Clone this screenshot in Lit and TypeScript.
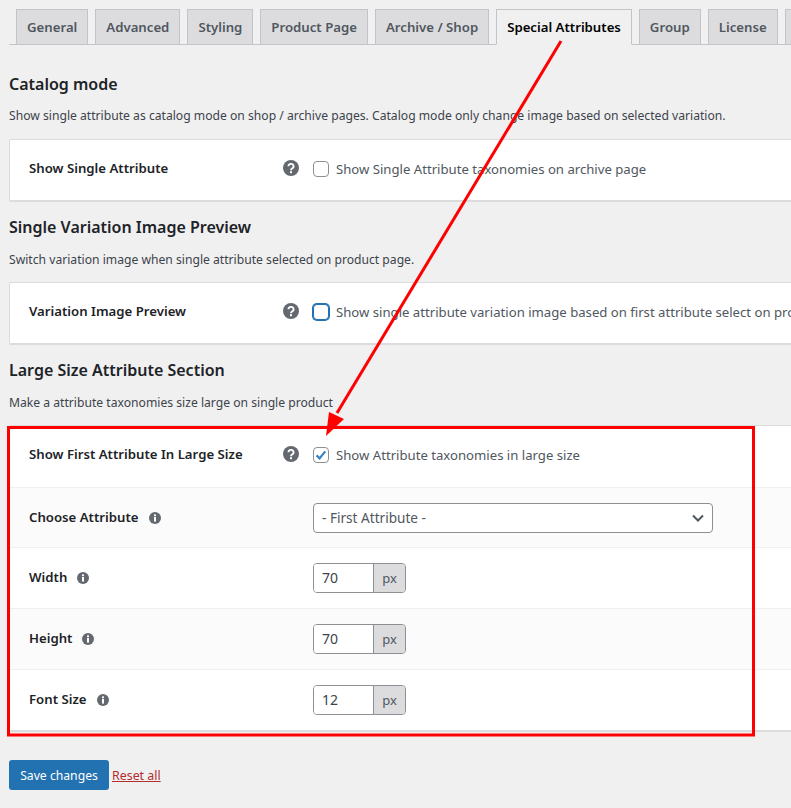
import { LitElement, html, css, svg } from "lit";
import { customElement } from "lit/decorators.js";

const TABS = ["General", "Advanced", "Styling", "Product Page", "Archive / Shop", "Special Attributes", "Group", "License", "Tutorials"];

const help = html`<svg class="help" viewBox="0 0 16 16" aria-hidden="true"><circle cx="8" cy="8" r="8" fill="#646970"/><path d="M5.4 6.2a2.6 2.4 0 1 1 4 2.1c-.9.6-1.4 1-1.4 1.9" fill="none" stroke="#fff" stroke-width="1.9"/><rect x="7" y="11.2" width="2" height="2" fill="#fff"/></svg>`;
const info = html`<svg class="info" viewBox="0 0 12 12" aria-hidden="true"><circle cx="6" cy="6" r="6" fill="#646970"/><rect x="5" y="5" width="2" height="4.6" fill="#fff"/><rect x="5" y="2.4" width="2" height="1.8" fill="#fff"/></svg>`;

@customElement("app-root")
export class AppRoot extends LitElement {
  static styles = css`
    :host { display: block; position: relative; width: 791px; height: 808px; overflow: hidden; background: #f0f0f1; font-family: "Noto Sans", sans-serif; font-size: 13px; color: #3c434a; }
    .page { padding: 9px 0 0 9px; width: 900px; }
    .tabs { display: flex; gap: 7px; padding-left: 7px; height: 35px; border-bottom: 1px solid #c3c4c7; }
    .tab { box-sizing: border-box; height: 36px; padding: 0 10px; border: 1px solid #c3c4c7; background: #dcdcde; color: #50575e; font-size: 13.2px; font-weight: 600; line-height: 34px; white-space: nowrap; }
    .tab.active { background: #f0f0f1; color: #000; border-bottom-color: #f0f0f1; }
    h2 { margin: 0; color: #1d2327; font-size: 16px; font-weight: 600; line-height: 22px; }
    .first { margin-top: 28px; }
    .next { margin-top: 14px; }
    p { height: 18px; line-height: 18px; font-size: 12.15px; white-space: nowrap; }
    .first + p { margin: 12px 0 14px; }
    .next + p { margin: 13px 0 13px; }
    .card { background: #fff; border: 1px solid #dcdcde; border-right: 0; border-bottom: 2px solid #dcdcde; border-radius: 2px 0 0 2px; }
    .row { display: flex; align-items: center; padding-left: 19px; border-bottom: 1px solid #f0f0f1; box-sizing: border-box; }
    .row:last-child { border-bottom: 0; }
    .row.alt { background: #fbfbfc; }
    .h60 { height: 60px; }
    .h61 { height: 61px; }
    .top2 { padding-bottom: 2px; }
    .top4 { height: 62px; padding-bottom: 4px; }
    .label { display: flex; align-items: center; gap: 10px; width: 284px; flex: none; color: #1d2327; font-size: 13.2px; font-weight: 600; white-space: nowrap; position: relative; top: -1px; }
    .label.spread { justify-content: space-between; gap: 0; width: 270px; margin-right: 14px; }
    .help { width: 16px; height: 16px; flex: none; }
    .info { width: 12px; height: 12px; flex: none; position: relative; top: 1px; }
    .check { display: flex; align-items: center; gap: 7px; white-space: nowrap; font-size: 13.15px; color: #50575e; }
    .box { box-sizing: border-box; width: 16px; height: 16px; flex: none; border: 1px solid #8c8f94; border-radius: 4px; background: #fff; display: block; }
    .box.focus { border-color: #2271b1; box-shadow: 0 0 0 1px #2271b1; }
    .box svg { display: block; width: 14px; height: 14px; }
    .select { box-sizing: border-box; width: 400px; height: 30px; display: flex; align-items: center; justify-content: space-between; padding: 0 8px; border: 1px solid #8c8f94; border-radius: 4px; background: #fff; color: #50575e; font-size: 13.6px; }
    .select svg { width: 12px; height: 8px; }
    .field { display: flex; height: 30px; box-sizing: border-box; border: 1px solid #8c8f94; border-radius: 4px; overflow: hidden; width: 93px; }
    .value { width: 60px; flex: none; padding-left: 8px; box-sizing: border-box; line-height: 28px; background: #fff; color: #3c434a; font-size: 14px; border-right: 1px solid #8c8f94; }
    .unit { flex: 1; background: #dcdcde; color: #50575e; text-align: center; line-height: 28px; }
    .actions { display: flex; align-items: center; gap: 3px; margin-top: 28px; }
    .save { box-sizing: border-box; width: 100px; height: 30px; background: #2271b1; color: #fff; border-radius: 3px; text-align: center; line-height: 31px; font-size: 12.2px; }
    .reset { color: #b32d2e; text-decoration: underline; font-size: 12.4px; }
    .overlay { position: absolute; left: 0; top: 0; width: 791px; height: 808px; pointer-events: none; }
  `;

  private field(label: string, value: string, cls: string) {
    return html`<div class="row ${cls}"><div class="label">${label}${info}</div>
      <div class="field"><div class="value">${value}</div><div class="unit">px</div></div></div>`;
  }

  render() {
    return html`
      <div class="page">
        <nav class="tabs">${TABS.map((t) => html`<div class="tab ${t === "Special Attributes" ? "active" : ""}">${t}</div>`)}</nav>

        <h2 class="first">Catalog mode</h2>
        <p>Show single attribute as catalog mode on shop / archive pages. Catalog mode only change image based on selected variation.</p>
        <section class="card">
          <div class="row h60 top2"><div class="label spread">Show Single Attribute${help}</div>
            <label class="check"><span class="box"></span>Show Single Attribute taxonomies on archive page</label></div>
        </section>

        <h2 class="next">Single Variation Image Preview</h2>
        <p>Switch variation image when single attribute selected on product page.</p>
        <section class="card">
          <div class="row h60 top2"><div class="label spread">Variation Image Preview${help}</div>
            <label class="check"><span class="box focus"></span>Show single attribute variation image based on first attribute select on product page</label></div>
        </section>

        <h2 class="next">Large Size Attribute Section</h2>
        <p>Make a attribute taxonomies size large on single product</p>
        <section class="card">
          <div class="row top4"><div class="label spread">Show First Attribute In Large Size${help}</div>
            <label class="check"><span class="box"><svg viewBox="0 0 14 14"><path d="M2.6 7.4l3 3 5.6-7" fill="none" stroke="#3582c4" stroke-width="2.2"/></svg></span>Show Attribute taxonomies in large size</label></div>
          <div class="row alt h60"><div class="label">Choose Attribute${info}</div>
            <div class="select">- First Attribute -<svg viewBox="0 0 12 8"><path d="M1 1.5l5 5 5-5" fill="none" stroke="#50575e" stroke-width="2"/></svg></div></div>
          ${this.field("Width", "70", "h61")}
          ${this.field("Height", "70", "alt h61")}
          ${this.field("Font Size", "12", "h60")}
        </section>

        <div class="actions"><div class="save">Save changes</div><a class="reset">Reset all</a></div>
      </div>
      <svg class="overlay" viewBox="0 0 791 808" aria-hidden="true">
        ${svg`<rect x="8.5" y="427.5" width="745" height="307.5" fill="none" stroke="#f00" stroke-width="3"/>
        <line x1="561" y1="41" x2="337" y2="413" stroke="#f00" stroke-width="3"/>
        <polygon points="326,436 329,412 344,419" fill="#f00"/>`}
      </svg>
    `;
  }
}
